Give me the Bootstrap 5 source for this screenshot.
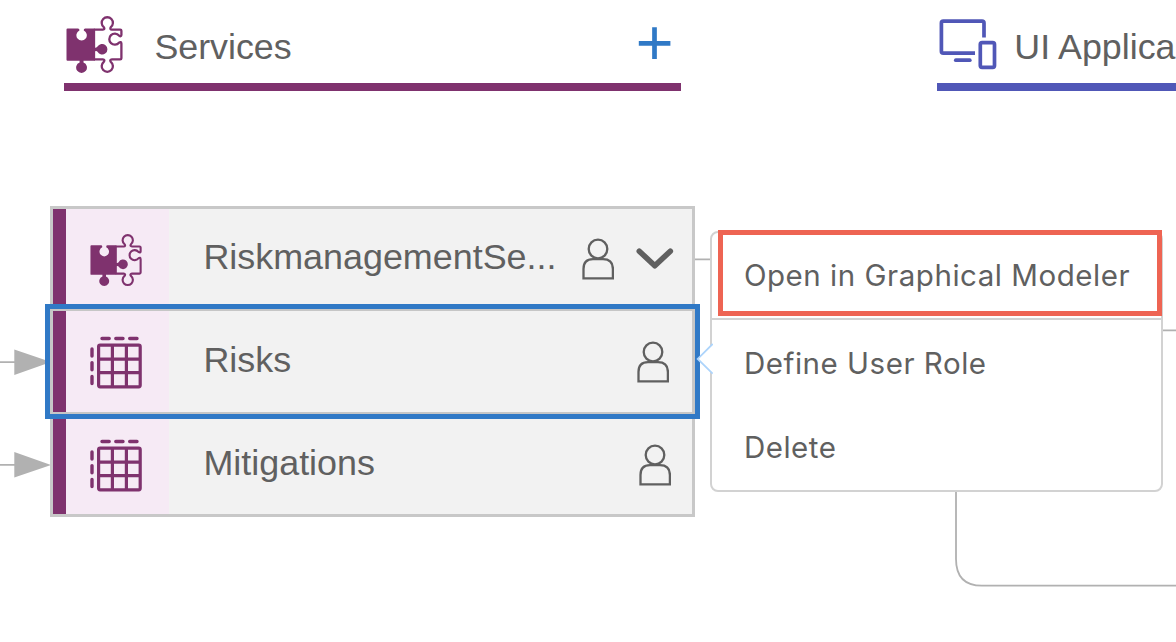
<!DOCTYPE html>
<html lang="en">
<head>
<meta charset="utf-8">
<meta name="viewport" content="width=device-width, initial-scale=1">
<title>Services</title>
<link href="https://cdn.jsdelivr.net/npm/bootstrap@5.3.0/dist/css/bootstrap.min.css" rel="stylesheet">
<style>
body{font-family:"Liberation Sans",Arial,sans-serif;color:#606060;background:#fff}
.canvas{width:1176px;height:642px}
svg{display:block;flex:none}
.wires{left:0;top:0}
.lane{top:0;height:91px;font-size:35.8px}
.lane-title{line-height:40px;margin-top:27px}
.lane-services{left:64.4px;width:616.3px;border-bottom:8px solid #7f326e}
.lane-ui{left:937px;width:239px;border-bottom:8px solid #5057b7}
.node-group{left:50px;top:206px;width:644.6px;height:311px;border:3px solid #c8c8c8;background:#f2f2f2}
.entity{font-size:35.9px;height:102.8px}
.entity-strip{width:13px;background:#7f326e}
.entity-icon{width:102.5px;background:#f6eaf5}
.entity-name{margin-left:34.9px;line-height:40px}
.selection{left:45.3px;top:304px;width:654.3px;height:115.4px;border:5px solid #3079c6}
.selection-inner{border:2px solid #c6c6c6;height:100%}
.ctx-menu{left:710px;top:230.5px;width:453px;height:261px;border:2px solid #d2d2d2;border-radius:8px;background:#fff;font-family:Inter,sans-serif;font-size:29.5px;letter-spacing:.53px}
.ctx-item{padding-left:31.9px;height:84px;white-space:nowrap;line-height:36px}
.ctx-first{height:87.6px;border-bottom:2px solid #d2d2d2}
.ctx-item:not(.ctx-first){padding-top:2px}
.callout{left:718.3px;top:230.2px;width:443.6px;height:85.7px;border:5px solid #ee6453}
.pointer{left:694px;top:340px}
</style>
</head>
<body>
<svg width="0" height="0" class="position-absolute" aria-hidden="true">
  <symbol id="puzzle" viewBox="66.8 15.6 58 58">
    <path fill="#7f326e" d="M68.3 28H78.8Q80.5 28 80.2 30.2A5.2 5.2 0 1 0 84.6 30.2Q84.3 28 86 28H95.8V47.3Q97.6 47.6 98.3 46.2A5.3 5.3 0 1 1 98.3 51.4Q97.6 50.3 95.8 50.8V60.3H84.3V62.1A5.4 5.4 0 1 1 80.4 62.1V60.3H68.3Q67.3 60.3 67.3 59.3V29Q67.3 28 68.3 28Z"/>
    <path fill="none" stroke="#7f326e" stroke-width="2.3" d="M94.8 48V30.3Q94.8 29.2 96 29.2H103.6Q106.2 29 104.6 26.8A5.6 5.6 0 1 1 111.6 26.8Q110.2 29 112.8 29.2H121Q122.2 29.2 122.2 30.3V34.6Q122 36.8 119.8 35.2A5.5 5.5 0 1 0 119.8 42.3Q122 40.6 122.2 43.2V57.8Q122.2 59 121 59H112.8Q110 59.3 111.6 61.5A5.6 5.6 0 1 1 104.6 61.5Q106.2 59.3 103.6 59H96Q94.8 59 94.8 57.8V50"/>
  </symbol>
  <symbol id="table" viewBox="90 336 52 53">
    <g fill="none" stroke="#7f326e" stroke-width="3.2"><rect x="98.6" y="345.2" width="41.6" height="41.6" rx="1.5"/><path d="M112.4 345V387M126.4 345V387M98.5 359.2H140M98.5 372.7H140"/><path stroke-linecap="round" stroke-width="3.4" d="M102 338.5H109.2M115.8 338.5H123M129.7 338.5H137M92 349V356M92 362.6V369.7M92 376.4V383.5"/></g>
  </symbol>
  <symbol id="person" viewBox="0 0 32 42"><g fill="none" stroke="#606060" stroke-width="2.3"><circle cx="16" cy="11" r="9.3"/><path d="M1.5 40.4V31Q1.5 21.2 11 21.2H21Q30.9 21.2 30.9 31V40.4Z"/></g></symbol>
</svg>

<main class="canvas position-relative overflow-hidden">
  <svg class="wires position-absolute" width="1176" height="642">
    <g fill="none" stroke="#b1b1b1" stroke-width="1.8"><path d="M0 362.1H16M0 464.9H16M694 259.3H711M1162 330.3H1176M956 490V559Q956 585.7 982 585.7H1176"/></g>
    <path fill="#b1b1b1" d="M14.3 349.4L51 362.1L14.3 374.9ZM14.3 452.1L51 464.9L14.3 477.6Z"/>
  </svg>

  <header class="lane lane-services position-absolute d-flex">
    <svg width="58" height="58" class="mt-3" style="margin-left:2px"><use href="#puzzle"/></svg>
    <span class="lane-title" style="margin-left:30px">Services</span>
    <svg class="ms-auto" width="52" height="80" viewBox="629 0 52 80"><path stroke="#3079c6" stroke-width="4.7" d="M638.8 43.4H670.4M654.5 27.3V59"/></svg>
  </header>
  <header class="lane lane-ui position-absolute d-flex">
    <svg width="62" height="80" viewBox="937 0 62 80" fill="none" stroke="#5057b7" stroke-width="3.7"><path d="M984 37.5V23Q984 21.1 982 21.1H943.3Q941.4 21.1 941.4 23V51.2Q941.4 53.1 943.3 53.1H975"/><path stroke-linecap="round" d="M955.8 60.2H969.8"/><rect x="980.3" y="42.6" width="14.2" height="24.8" rx="1.8"/></svg>
    <span class="lane-title text-nowrap" style="margin-left:15.3px">UI Applica</span>
  </header>

  <section class="node-group position-absolute">
    <div class="entity d-flex">
      <div class="entity-strip"></div>
      <div class="entity-icon d-flex justify-content-center"><svg style="margin-top:24.6px;margin-right:1px" width="53" height="53"><use href="#puzzle"/></svg></div>
      <span class="entity-name pt-4 mt-1">RiskmanagementSe...</span>
      <svg class="ms-auto" style="margin-top:29px;margin-right:21.8px" width="32" height="42"><use href="#person"/></svg>
      <svg style="margin-top:37.4px;margin-right:18.1px" width="38" height="26" viewBox="0 0 38 26"><path d="M3.3 5.2L18.8 19.8L34.3 5.2" fill="none" stroke="#606060" stroke-width="5.6" stroke-linecap="round" stroke-linejoin="round"/></svg>
    </div>
    <div class="entity d-flex">
      <div class="entity-strip"></div>
      <div class="entity-icon d-flex justify-content-center"><svg style="margin-top:24.6px;margin-right:2.5px" width="52" height="53" overflow="visible"><use href="#table"/></svg></div>
      <span class="entity-name pt-4 mt-1">Risks</span>
      <svg class="ms-auto" style="margin-top:29.3px;margin-right:22.6px" width="32" height="42"><use href="#person"/></svg>
    </div>
    <div class="entity d-flex" style="height:99.4px">
      <div class="entity-strip"></div>
      <div class="entity-icon d-flex justify-content-center"><svg style="margin-top:24.6px;margin-right:2.5px" width="52" height="53"><use href="#table"/></svg></div>
      <span class="entity-name pt-4 mt-1">Mitigations</span>
      <svg class="ms-auto" style="margin-top:29.4px;margin-right:20.9px" width="32" height="42"><use href="#person"/></svg>
    </div>
  </section>
  <div class="selection position-absolute"><div class="selection-inner"></div></div>

  <nav class="ctx-menu position-absolute">
    <div class="ctx-item ctx-first d-flex align-items-center"><span>Open in Graphical Modeler</span></div>
    <div class="ctx-item d-flex align-items-center"><span>Define User Role</span></div>
    <div class="ctx-item d-flex align-items-center"><span>Delete</span></div>
  </nav>
  <svg class="pointer position-absolute" width="19" height="38" viewBox="694 340 19 38"><path d="M712.7 344L697.7 358.9L712.7 373.6" fill="#fff" stroke="#add4fb" stroke-width="1.8"/></svg>
  <div class="callout position-absolute"></div>
</main>
<script src="https://cdn.jsdelivr.net/npm/bootstrap@5.3.0/dist/js/bootstrap.bundle.min.js"></script>
</body>
</html>
